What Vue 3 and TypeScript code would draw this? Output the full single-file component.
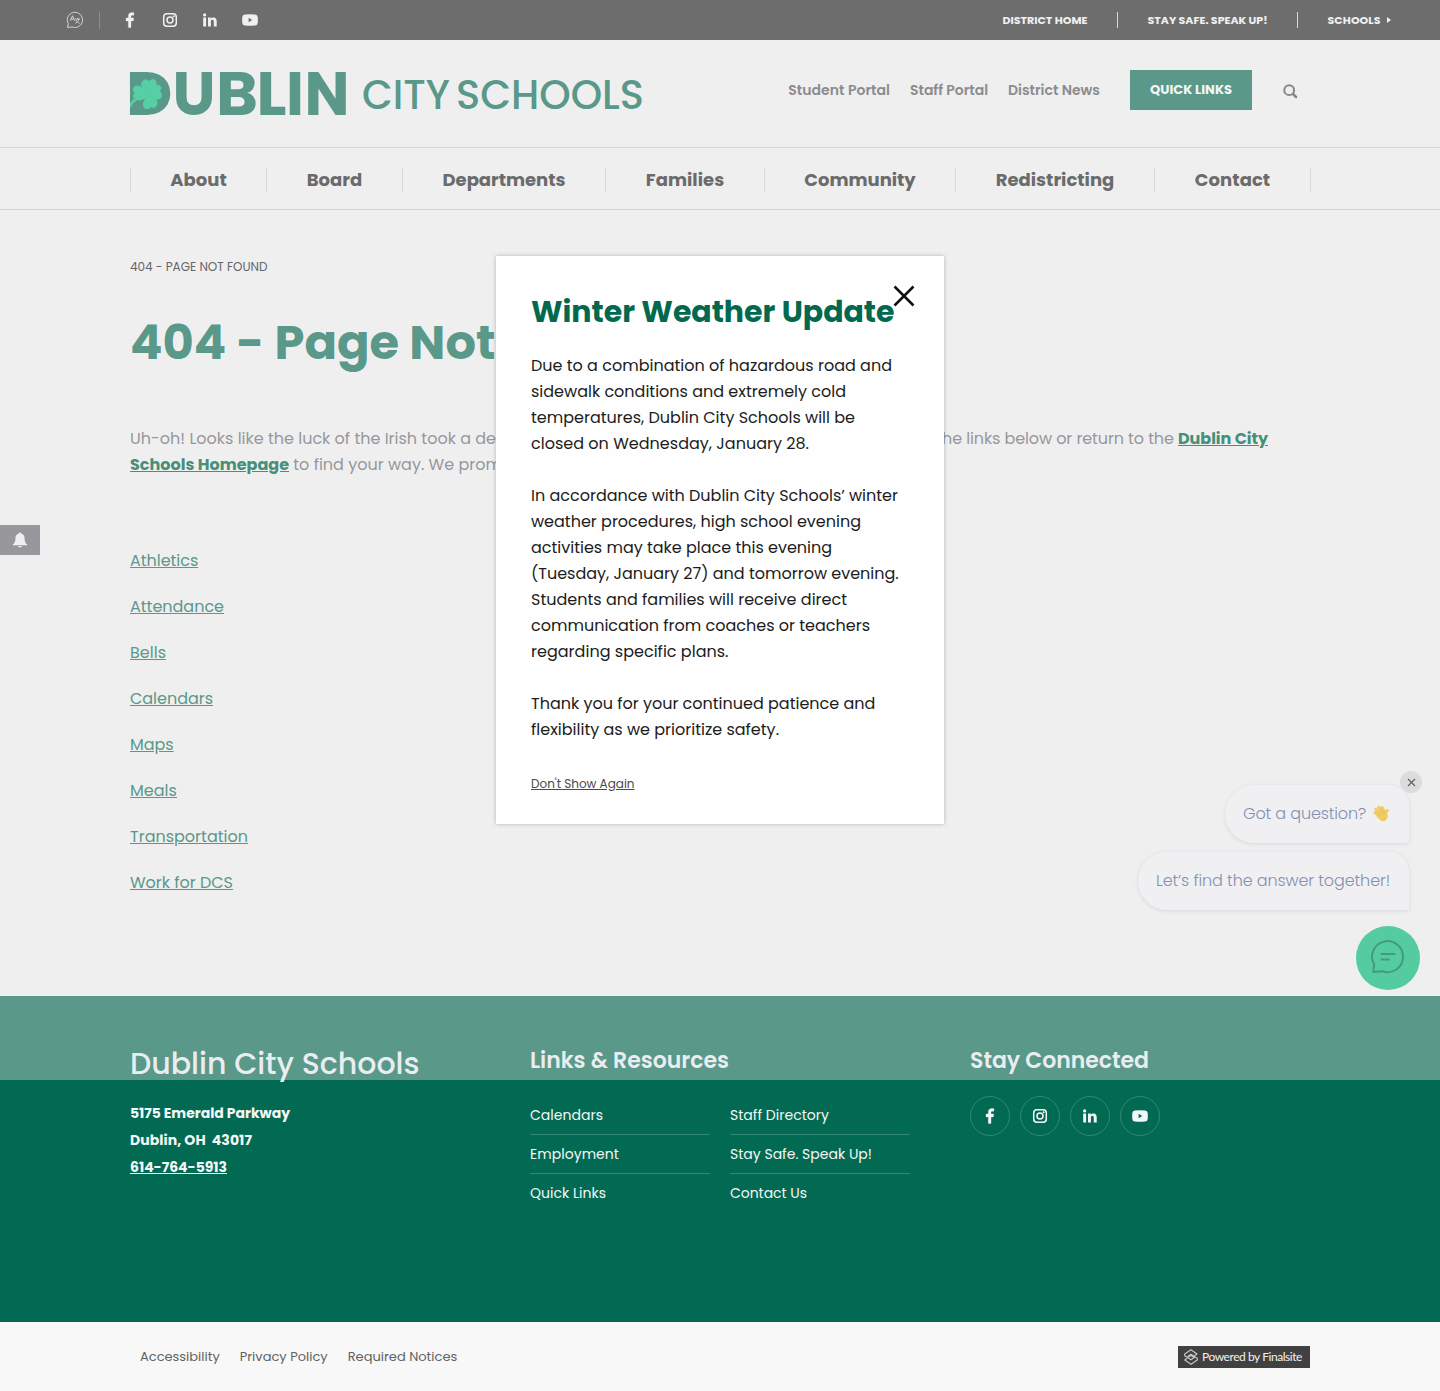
<script setup lang="ts">
import type { Directive } from 'vue'

interface Label {
  text: string
  w: number
}

interface NavItem extends Label {
  cell: number
}

/* Spreads the letters of a label so that it fills the given width. */
const vFit: Directive<HTMLElement, number> = {
  mounted(el, binding) {
    const count = (el.textContent ?? '').length
    const natural = el.getBoundingClientRect().width
    if (count > 0) el.style.letterSpacing = `${(binding.value - natural) / count}px`
  },
}

const social = ['facebook', 'instagram', 'linkedin', 'youtube']

const portals: Label[] = [
  { text: 'Student Portal', w: 101.7 },
  { text: 'Staff Portal', w: 78 },
  { text: 'District News', w: 92 },
]

const nav: NavItem[] = [
  { text: 'About', w: 56.5, cell: 136 },
  { text: 'Board', w: 55.5, cell: 136 },
  { text: 'Departments', w: 123, cell: 203 },
  { text: 'Families', w: 78.5, cell: 159 },
  { text: 'Community', w: 111.5, cell: 191 },
  { text: 'Redistricting', w: 118.5, cell: 199 },
  { text: 'Contact', w: 75.5, cell: 156 },
]

const links: Label[] = [
  { text: 'Athletics', w: 68.3 },
  { text: 'Attendance', w: 94 },
  { text: 'Bells', w: 36 },
  { text: 'Calendars', w: 83 },
  { text: 'Maps', w: 43.7 },
  { text: 'Meals', w: 47 },
  { text: 'Transportation', w: 118 },
  { text: 'Work for DCS', w: 103 },
]

const notice: Label[][] = [
  [
    { text: 'Due to a combination of hazardous road and', w: 361 },
    { text: 'sidewalk conditions and extremely cold', w: 315 },
    { text: 'temperatures, Dublin City Schools will be', w: 324 },
    { text: 'closed on Wednesday, January 28.', w: 278 },
  ],
  [
    { text: 'In accordance with Dublin City Schools’ winter', w: 367 },
    { text: 'weather procedures, high school evening', w: 330 },
    { text: 'activities may take place this evening', w: 301 },
    { text: '(Tuesday, January 27) and tomorrow evening.', w: 367.7 },
    { text: 'Students and families will receive direct', w: 316 },
    { text: 'communication from coaches or teachers', w: 339 },
    { text: 'regarding specific plans.', w: 197.5 },
  ],
  [
    { text: 'Thank you for your continued patience and', w: 344.3 },
    { text: 'flexibility as we prioritize safety.', w: 248 },
  ],
]

const resources: Label[][] = [
  [
    { text: 'Calendars', w: 73 },
    { text: 'Employment', w: 89 },
    { text: 'Quick Links', w: 76 },
  ],
  [
    { text: 'Staff Directory', w: 99 },
    { text: 'Stay Safe. Speak Up!', w: 142 },
    { text: 'Contact Us', w: 77 },
  ],
]

const legal: Label[] = [
  { text: 'Accessibility', w: 79.7 },
  { text: 'Privacy Policy', w: 88 },
  { text: 'Required Notices', w: 109.6 },
]
</script>

<template>
  <div class="page">
    <svg class="defs" width="0" height="0" aria-hidden="true">
      <symbol id="facebook" viewBox="0 0 16 16">
        <path d="M6.300 15.500V8.900H4V6h2.300V4.200C6.300 1.900 7.600.6 9.700.6c1 0 1.900.1 2.200.1v2.500h-1.500c-1.100 0-1.400.6-1.400 1.400V6h2.700l-.4 2.900H9v6.600z" fill="currentColor" stroke="currentColor" stroke-width=".3" />
      </symbol>
      <symbol id="instagram" viewBox="0 0 16 16">
        <rect x="1.700" y="1.700" width="12.600" height="12.600" rx="3.200" fill="none" stroke="currentColor" stroke-width="1.500" />
        <circle cx="8" cy="8" r="3" fill="none" stroke="currentColor" stroke-width="1.500" />
        <circle cx="11.700" cy="4.300" r="1" fill="currentColor" />
      </symbol>
      <symbol id="linkedin" viewBox="0 0 16 16">
        <path d="M1.200 5.600h2.900v8.900H1.200zM2.650 1.300a1.600 1.600 0 1 1 0 3.200 1.600 1.600 0 0 1 0-3.200zM6 5.600h2.700v1.200c.5-.9 1.500-1.400 2.700-1.400 2.700 0 3.300 1.700 3.300 4v5.100h-2.900V10c0-1.100 0-2.200-1.400-2.200S8.900 8.900 8.900 10v4.500H6z" fill="currentColor" />
      </symbol>
      <symbol id="youtube" viewBox="0 0 16 16">
        <path fill-rule="evenodd" d="M3 2.400Q8 2 13 2.400Q15.500 2.500 15.700 5Q16 8 15.700 11Q15.500 13.500 13 13.600Q8 14 3 13.600Q.5 13.500.3 11Q0 8 .3 5Q.5 2.500 3 2.400zM6.600 5.800v4.400L10.300 8z" fill="currentColor" />
      </symbol>
    </svg>

    <div class="topbar">
      <div class="top-left">
        <svg class="translate" viewBox="0 0 18 18" width="18" height="18" fill="none" stroke="currentColor">
          <path d="M2.300 12.600A7.600 7.600 0 1 1 6 15.900L1.500 16.500z" />
          <path d="M4.400 9.700 6.500 4.800l2.100 4.900M5.100 8.200h2.800M9 8h5M11.500 7v1M13 8c-.5 2-1.800 3.400-3.700 4.200M10 9c.7 1.500 2 2.600 3.700 3.300" stroke-width="1" />
        </svg>
        <span class="tick"></span>
        <svg v-for="s in social" :key="s" class="top-social" width="16" height="16"><use :href="'#' + s" /></svg>
      </div>
      <div class="top-right">
        <span class="top-link"><b v-fit="85">DISTRICT HOME</b></span>
        <span class="top-link"><b v-fit="120">STAY SAFE. SPEAK UP!</b></span>
        <span class="top-link"><b v-fit="53">SCHOOLS</b><i class="arrow"></i></span>
      </div>
    </div>

    <header class="header">
      <svg class="logo" width="514" height="48" viewBox="0 0 514 48">
        <g class="logo-bold">
          <text x="-4" y="45" textLength="46.500" lengthAdjust="spacingAndGlyphs">D</text>
          <text x="42.500" y="45" textLength="43" lengthAdjust="spacingAndGlyphs">U</text>
          <text x="86" y="45" textLength="42" lengthAdjust="spacingAndGlyphs">B</text>
          <text x="126.500" y="45" textLength="30" lengthAdjust="spacingAndGlyphs">L</text>
          <text x="156" y="45" textLength="18" lengthAdjust="spacingAndGlyphs">I</text>
          <text x="174.500" y="45" textLength="45" lengthAdjust="spacingAndGlyphs">N</text>
        </g>
        <ellipse cx="19" cy="23.500" rx="17" ry="17" fill="#5a9889" />
        <g fill="#55cfa3" transform="translate(1 2)">
          <path d="M18 23C11 18 9 13 11 10Q14 5 18 9Q22 5 25 9C27 13 22 19 18 23z" />
          <path d="M17 23C20 16 24 12 28 13Q32 15 29 19Q33 24 29 27C25 29 21 26 17 23z" />
          <path d="M17 22C24 25 28 29 26 33Q24 38 20 35Q17 39 13 36C10 32 14 26 17 22z" />
          <path d="M18 23C13 28 8 30 4 27Q0 25 3.500 21Q0 17 4 14C9 12 14 17 18 23z" />
          <path d="M17 22Q6 25-1 36V31Q4 24 17 21z" />
        </g>
        <g class="logo-light">
          <text x="232" y="38.500" textLength="88" lengthAdjust="spacingAndGlyphs">CITY</text>
          <text x="326" y="38.500" textLength="188" lengthAdjust="spacingAndGlyphs">SCHOOLS</text>
        </g>
      </svg>
      <div class="tools">
        <a v-for="p in portals" :key="p.text" class="portal"><span v-fit="p.w">{{ p.text }}</span></a>
        <button class="quick"><span v-fit="82">QUICK LINKS</span></button>
        <svg class="search" width="15" height="15" viewBox="0 0 15 15" fill="none" stroke="#87878a" stroke-linecap="round">
          <circle cx="6.200" cy="6.200" r="4.900" stroke-width="2" />
          <path d="m10 10 3 3" stroke-width="2.500" />
        </svg>
      </div>
    </header>

    <nav class="nav">
      <div class="nav-row">
        <a v-for="n in nav" :key="n.text" class="nav-item" :style="{ width: n.cell + 'px' }">
          <span v-fit="n.w">{{ n.text }}</span>
        </a>
      </div>
    </nav>

    <main class="main">
      <div class="crumb"><span v-fit="137.500">404 - PAGE NOT FOUND</span></div>
      <h1><span v-fit="365.500">404 - Page Not</span></h1>
      <div class="intro">
        <div class="intro-line"><span v-fit="366">Uh-oh! Looks like the luck of the Irish took a de</span><span class="rest"><span v-fit="236">he links below or return to the </span><a v-fit="90">Dublin City</a></span></div>
        <div><a v-fit="159">Schools Homepage</a><span v-fit="213"> to find your way. We prom</span></div>
      </div>
      <ul class="links">
        <li v-for="l in links" :key="l.text"><a v-fit="l.w">{{ l.text }}</a></li>
      </ul>
    </main>

    <footer class="footer">
      <section class="address">
        <h2><span v-fit="289.500">Dublin City Schools</span></h2>
        <div><b v-fit="160">5175 Emerald Parkway</b></div>
        <div><b v-fit="122">Dublin, OH&nbsp; 43017</b></div>
        <div><b v-fit="97" class="phone">614-764-5913</b></div>
      </section>
      <section class="resources">
        <h3><span v-fit="199">Links &amp; Resources</span></h3>
        <div class="res-cols">
          <ul v-for="(col, i) in resources" :key="i">
            <li v-for="r in col" :key="r.text"><span v-fit="r.w">{{ r.text }}</span></li>
          </ul>
        </div>
      </section>
      <section class="connect">
        <h3><span v-fit="179">Stay Connected</span></h3>
        <div class="circles">
          <a v-for="s in social" :key="s"><svg width="16" height="16"><use :href="'#' + s" /></svg></a>
        </div>
      </section>
    </footer>

    <div class="bottom">
      <div class="legal">
        <a v-for="l in legal" :key="l.text"><span v-fit="l.w">{{ l.text }}</span></a>
      </div>
      <div class="badge">
        <svg width="16" height="16" viewBox="0 0 16 16" fill="none" stroke="#c6c6c6" stroke-width="1.200" stroke-linejoin="round">
          <path d="M11.500 6.600 14 5 8 .8 1.700 5v1.800L8 10.800l3.300-2.200L8 6.400 5.500 8M4.200 9.200 1.700 11 8 15.200l6.300-4.200V9.200L8 5.200 4.700 7.400" />
        </svg>
        <span v-fit="100">Powered by Finalsite</span>
      </div>
    </div>

    <div class="bell">
      <svg width="16" height="16" viewBox="0 0 14 14" fill="#f0f0f3">
        <path d="M7 .5c.6 0 1 .4 1 .9 2 .5 3 2.100 3 4.100 0 3 .6 4.200 2.200 5.500v.6H.8V11C2.400 9.700 3 8.500 3 5.500 3 3.500 4 1.900 6 1.400c0-.5.4-.9 1-.9zM5.400 12.300h3.200a1.600 1.300 0 0 1-3.200 0z" />
      </svg>
    </div>

    <div class="modal">
      <h2><span v-fit="363.500">Winter Weather Update</span></h2>
      <p v-for="(par, i) in notice" :key="i">
        <span v-for="line in par" :key="line.text" class="line"><span v-fit="line.w">{{ line.text }}</span></span>
      </p>
      <a class="dismiss"><span v-fit="103.500">Don't Show Again</span></a>
      <svg class="close" width="22" height="22" viewBox="0 0 22 22" stroke="#111" stroke-width="2.500">
        <path d="m1.500 1.500 19 19m0-19-19 19" />
      </svg>
    </div>

    <div class="chat">
      <div class="bubble">
        <span v-fit="123">Got a question?</span>
        <svg class="wave" width="18" height="19" viewBox="0 0 19 19">
          <g stroke="#f0ca62" stroke-width="3" stroke-linecap="round" fill="none">
            <path d="M3 8.500 7.500 13M4 4.800 9.500 11M7 2.800 12.500 10M10.700 3.200 14 9M14 10.500Q14.200 7.500 16.300 6.300" />
          </g>
          <path d="M5.500 10.500 12 6.500Q17.500 9 16.500 13.500Q14.500 18.500 10 17.500Q7.500 16.500 4.500 12z" fill="#f0ca62" />
          <path d="m5.500 8.300 3.500 3.500M7.300 5.800l3.600 4.400M9.600 4.400l3.300 4.600" stroke="#dfb04c" stroke-width=".6" />
        </svg>
      </div>
      <div class="bubble"><span v-fit="234">Let’s find the answer together!</span></div>
      <div class="chat-button">
        <svg width="36" height="36" viewBox="0 0 36 36" fill="none" stroke="#439b7d" stroke-width="2" stroke-linecap="round" stroke-linejoin="round">
          <path d="M4.200 25.500A15.500 15.500 0 1 1 12.500 32.300L3.200 33z" />
          <path d="M11.500 15h13M11.500 20.500h7.500" />
        </svg>
      </div>
      <div class="chat-close">
        <svg width="9" height="9" viewBox="0 0 9 9" stroke="#606064" stroke-width="1.200"><path d="m1 1 7 7m0-7L1 8" /></svg>
      </div>
    </div>
  </div>
</template>

<style scoped>
.page {
  position: relative;
  width: 1440px;
  height: 1391px;
  overflow: hidden;
  background: #efeff0;
  font-family: Poppins, Inter, "Open Sans", sans-serif;
  font-size: 16px;
  line-height: 26px;
  color: #97979b;
}
.page span,
.page b,
.page a { white-space: pre; }
.defs { position: absolute; }
h1, h2, h3, p, ul { margin: 0; padding: 0; }
ul { list-style: none; }

.topbar {
  height: 40px;
  display: flex;
  justify-content: space-between;
  align-items: center;
  background: #6d6d6d;
  color: #f0f0f2;
}
.top-left { display: flex; align-items: center; padding-left: 66px; }
.translate { color: #d5d5d5; }
.tick { width: 1px; height: 17px; margin-left: 15px; margin-right: -2px; background: #8b8b8b; }
.top-social { margin-left: 24px; }
.top-right { display: flex; align-items: center; padding-right: 49.5px; }
.top-link {
  display: flex;
  align-items: center;
  height: 16px;
  font-size: 11px;
  line-height: 16px;
}
.top-link + .top-link { margin-left: 29px; padding-left: 30px; border-left: 1px solid #d8d8d8; }
.top-link + .top-link { margin-left: 29.5px; padding-left: 29.5px; }
.arrow { margin-left: 6px; border: 3px solid transparent; border-left: 4px solid #f0f0f2; border-right: 0; }

.header {
  box-sizing: border-box;
  height: 108px;
  display: flex;
  justify-content: space-between;
  align-items: flex-start;
  padding: 30px 142px 0 130px;
  border-bottom: 1px solid #d6d6d8;
}
.logo { overflow: visible; fill: #5a9889; }
.logo-bold { font-size: 61.5px; font-weight: 700; }
.logo-light { font-size: 40px; font-weight: 500; }
.tools { display: flex; align-items: center; height: 40px; }
.portal { margin-right: 20px; font-size: 14px; font-weight: 600; color: #8b8b8e; }
.quick {
  width: 122px;
  height: 40px;
  margin: 0 31px 0 10px;
  padding: 0;
  border: 0;
  background: #5a9889;
  color: #f4f6f6;
  font: 700 13px/26px Poppins, Inter, sans-serif;
}
.search { position: relative; top: 1px; }

.nav {
  box-sizing: border-box;
  height: 62px;
  padding: 20px 129px 0 130px;
  border-bottom: 1px solid #d2d2d4;
}
.nav-row { display: flex; height: 24px; border-right: 1px solid #d8d8da; }
.nav-item {
  box-sizing: border-box;
  border-left: 1px solid #d8d8da;
  text-align: center;
  font-size: 18px;
  font-weight: 700;
  line-height: 24px;
  color: #6b6b6b;
}

.main { height: 786px; box-sizing: border-box; padding: 47px 130px 0; }
.crumb { height: 20px; font-size: 12px; line-height: 20px; color: #66666a; }
h1 { margin-top: 36px; font-size: 48px; line-height: 60px; font-weight: 700; color: #5a9889; white-space: pre; }
.intro { margin-top: 53px; }
.intro-line { display: flex; }
.rest { margin-left: 446px; }
.intro a { font-weight: 700; color: #459079; text-decoration: underline; }
.links { margin-top: 60px; padding-top: 10px; }
.links li { height: 26px; margin-bottom: 20px; }
.links a { color: #5a9889; text-decoration: underline; }

.footer {
  box-sizing: border-box;
  height: 326px;
  display: flex;
  padding: 47px 130px 0;
  background: linear-gradient(#5a9889 84px, #026a53 84px);
  color: #f4f7f7;
  font-size: 14px;
}
.address { width: 400px; line-height: 27px; }
.address h2 { height: 40px; padding-top: 1px; margin-bottom: 16px; font-size: 30px; line-height: 40px; font-weight: 500; color: #e9edf0; }
.phone { text-decoration: underline; }
.resources { width: 440px; }
h3 { height: 34px; padding-top: 1px; font-size: 22px; line-height: 34px; font-weight: 600; color: #e9edf0; }
.res-cols { display: flex; gap: 20px; margin-top: 18px; }
.res-cols ul { width: 180px; }
.res-cols li { box-sizing: border-box; height: 39px; line-height: 38px; border-bottom: 1px solid #33886f; }
.res-cols li:last-child { border-bottom: 0; }
.circles { display: flex; gap: 10px; margin-top: 18px; }
.circles a {
  box-sizing: border-box;
  width: 40px;
  height: 40px;
  display: grid;
  place-items: center;
  border: 1px solid #33886f;
  border-radius: 50%;
}

.bottom {
  height: 69px;
  display: flex;
  justify-content: space-between;
  align-items: center;
  padding: 0 130px 0 140px;
  background: #f8f8f8;
  font-size: 13px;
}
.legal { display: flex; gap: 20px; color: #626262; }
.badge {
  box-sizing: border-box;
  width: 132px;
  height: 22px;
  display: flex;
  align-items: center;
  gap: 3px;
  padding-left: 5px;
  background: #414141;
  color: #f1f1f1;
  font: 12px/22px Lato, sans-serif;
}

.bell {
  position: absolute;
  left: 0;
  top: 525px;
  width: 40px;
  height: 30px;
  display: grid;
  place-items: center;
  background: #98979b;
}

.modal {
  position: absolute;
  left: 496px;
  top: 256px;
  box-sizing: border-box;
  width: 448px;
  height: 568px;
  padding: 36px 35px 0;
  background: #fefefe;
  box-shadow: 0 0 4px rgba(0, 0, 0, 0.25);
  color: #1c1c1c;
}
.modal h2 { height: 40px; margin-bottom: 21px; font-size: 30px; line-height: 40px; font-weight: 700; color: #02694f; }
.modal p { margin-bottom: 26px; }
.line { display: block; }
.dismiss { display: block; margin-top: 29px; font-size: 12px; line-height: 24px; color: #4a4a4a; text-decoration: underline; }
.close { position: absolute; right: 29px; top: 29px; }

.chat {
  position: absolute;
  right: 31px;
  top: 785px;
  display: flex;
  flex-direction: column;
  align-items: flex-end;
  font-weight: 300;
  color: #8390b3;
}
.bubble {
  box-sizing: border-box;
  height: 58px;
  margin-bottom: 9px;
  padding: 16px 19px 0 18px;
  display: flex;
  border-radius: 30px 20px 0 30px;
  background: #f0f0f2;
  box-shadow: 0 1px 4px rgba(0, 0, 0, 0.1);
}
.wave { margin: 3px 0 0 6px; }
.chat-button {
  width: 64px;
  height: 64px;
  margin: 7px -11px 0 0;
  display: grid;
  place-items: center;
  border-radius: 50%;
  background: #55cba0;
}
.chat-button svg { position: relative; top: -1px; }
.chat-close {
  position: absolute;
  right: -13px;
  top: -14px;
  width: 22px;
  height: 22px;
  display: grid;
  place-items: center;
  border-radius: 50%;
  background: #dcdcdf;
}
</style>

<style>
body { background: #f8f8f8; }
</style>
